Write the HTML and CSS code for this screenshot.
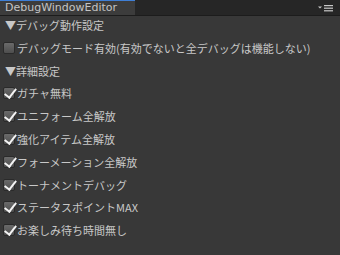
FILE: index.html
```html
<!DOCTYPE html>
<html lang="ja">

<head>
  <meta charset="UTF-8">
  <title>DebugWindowEditor</title>
  <link rel="stylesheet" href="styles.css">
</head>

<body>
  <div class="window">
    <header class="tabbar">
      <div class="tab">DebugWindowEditor</div>
      <div class="menu">
        <svg width="16" height="8" viewBox="0 0 16 8">
          <path d="M0 1.5h4l-2 2z" fill="#c8c8c8" />
          <rect x="6" y="0" width="9" height="1.2" fill="#c8c8c8" />
          <rect x="6" y="2.6" width="9" height="1.2" fill="#c8c8c8" />
          <rect x="6" y="5.2" width="9" height="1.2" fill="#c8c8c8" />
        </svg>
      </div>
    </header>

    <div class="content">
      <div class="row fold">▼デバッグ動作設定</div>
      <label class="row toggle"><span class="box"></span>デバッグモード有効(有効でないと全デバッグは機能しない)</label>

      <div class="row fold">▼詳細設定</div>
      <label class="row toggle"><span class="box on"></span>ガチャ無料</label>
      <label class="row toggle"><span class="box on"></span>ユニフォーム全解放</label>
      <label class="row toggle"><span class="box on"></span>強化アイテム全解放</label>
      <label class="row toggle"><span class="box on"></span>フォーメーション全解放</label>
      <label class="row toggle"><span class="box on"></span>トーナメントデバッグ</label>
      <label class="row toggle"><span class="box on"></span>ステータスポイントMAX</label>
      <label class="row toggle"><span class="box on"></span>お楽しみ待ち時間無し</label>
    </div>
  </div>
</body>

</html>
```

FILE: styles.css
```css
* {
  box-sizing: border-box;
}

html,
body {
  height: 100%;
}

body {
  margin: 0;
  background: #383838;
  color: #c8c8c8;
  font-family: "DejaVu Sans", "Noto Sans CJK JP", sans-serif;
  font-size: 11px;
  overflow: hidden;
}

.tabbar {
  display: flex;
  justify-content: space-between;
  height: 16px;
  background: #262626;
  border-bottom: 1px solid #1c1c1c;
}

.tab {
  width: 135px;
  height: 15px;
  padding-left: 5px;
  background: #3c3c3c;
  border-top: 1px solid #3f7fd6;
  font-size: 11px;
  line-height: 14px;
  color: #c4c4c4;
}

.menu {
  padding: 5px 6px 0 0;
}

.menu svg {
  display: block;
}

.content {
  display: flex;
  flex-direction: column;
  gap: 6.8px;
  padding-top: 1px;
}

.row {
  display: flex;
  align-items: center;
  height: 16px;
  white-space: nowrap;
  font-family: "Noto Sans CJK JP", sans-serif;
}

.fold {
  padding-left: 5px;
}

.toggle {
  padding-left: 3px;
}

.box {
  width: 12px;
  height: 12px;
  margin-right: 2px;
  border-radius: 2px;
  border: 1px solid #2a2a2a;
  background: linear-gradient(#6a6a6a, #4e4e4e);
  position: relative;
  flex: none;
}

.box.on::after {
  content: "";
  position: absolute;
  left: 3px;
  top: -2px;
  width: 4.5px;
  height: 10px;
  border: solid #f4f4f4;
  border-width: 0 2.5px 2.5px 0;
  transform: rotate(38deg);
}
```
